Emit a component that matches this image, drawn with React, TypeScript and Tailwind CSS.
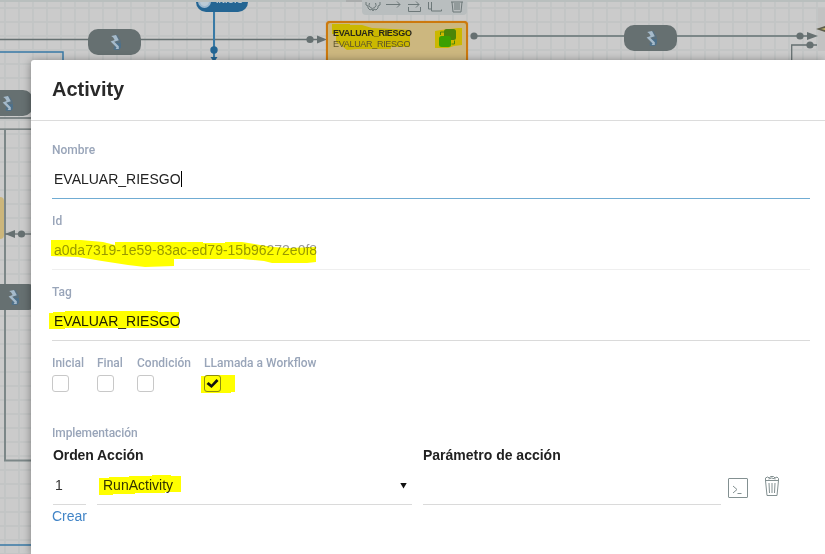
import React from "react";

function Zigzag({ className = "" }: { className?: string }) {
  return (
    <svg className={className} width="14" height="18" viewBox="0 0 14 18" fill="none">
      <path d="M8 10l5-.5v5L11 17H6l-.5-2z" fill="#4a708f" opacity=".8" />
      <path d="M8.500 2l3.500 6-4 1 4 4" stroke="#4a708f" strokeWidth="1.500" opacity=".5" />
      <path d="M3.200 3L8 2l2.800 5.300-4.600 1.500 4.600 4.400V16H7.600l1-1.600L2.600 8.600l4-1.700-1.400-2.400z" fill="#a5bacb" />
    </svg>
  );
}

function Relay({ className }: { className: string }) {
  return (
    <div className={`absolute flex h-[26px] w-[53px] items-center justify-center rounded-[10px] bg-[#667071] ${className}`}>
      <Zigzag />
    </div>
  );
}

function Diagram() {
  return (
    <div className="absolute inset-0 overflow-hidden bg-[#cbcbcb]">
      <svg className="absolute inset-0" width="825" height="554" fill="none">
        <defs>
          <pattern id="grid" x="4" y="7" width="14" height="14" patternUnits="userSpaceOnUse">
            <path d="M1 0v14M0 1h14" stroke="#c1c4c4" strokeWidth="1.6" />
          </pattern>
        </defs>
        <rect width="825" height="554" fill="url(#grid)" />
        <rect x="818" y="8" width="7" height="43" fill="#c2c2c2" />
        <g stroke="#667071" strokeWidth="1.3">
          <path d="M0 39.5h320M0 118h31M0 129.2h31" />
          <path d="M5 129v331.5h26" stroke="#7c8788" strokeWidth="2" />
          <path d="M5 234h26" />
          <path d="M475 36h336" stroke="#7c8788" strokeWidth="2" />
          <path d="M791.7 60V45H817" />
        </g>
        <g fill="#667071">
          <circle cx="310" cy="39.5" r="3.6" />
          <path d="M317 35.5l10 4-10 4z" />
          <circle cx="474" cy="36" r="3.6" />
          <circle cx="800" cy="36" r="3.6" />
          <path d="M807 32l11 4-11 4z" />
          <circle cx="810" cy="45" r="3.6" />
          <circle cx="21.5" cy="234" r="3.6" />
          <path d="M15 230l-10 4 10 4z" />
        </g>
        <path d="M825 26l-9 3 9 3z" fill="#5e5d4b" />
        <path d="M825 28l-4 1 4 1z" fill="#c6b86f" />
        <path d="M0 52h63v8M0 545h31" stroke="#397aa6" strokeWidth="1.5" />
        <path d="M214 11v49" stroke="#397aa6" strokeWidth="2" />
        <circle cx="214" cy="50" r="3.7" fill="#246593" />
        <path d="M210.5 57h7l-2 3h-3z" fill="#246593" />
      </svg>

      <div className="absolute left-[196px] top-[-13px] h-[25px] w-[52px] overflow-hidden rounded-[10px] bg-[#246593]">
        <div className="absolute left-[2px] top-[8px] h-[13px] w-[13px] rounded-full border-2 border-[#9eb9cf] bg-[#bccbd6]" />
        <span className="absolute left-[20px] top-[8px] font-['Liberation_Sans',sans-serif] text-[9px] font-bold leading-[10px] text-[#bccbd6]">INICIO</span>
      </div>
      <div className="absolute left-0 top-0 h-[2px] w-full bg-[#b9bfbe]" />
      <div className="absolute left-[346px] top-0 h-[2px] w-[50px] bg-[#aaadad]" />

      <Relay className="left-[88px] top-[29px]" />
      <Relay className="left-[624px] top-[25px]" />
      <Relay className="left-[-20px] top-[90px]" />
      <Relay className="left-[-14px] top-[284px]" />
      <div className="absolute left-0 top-[197px] h-[42px] w-[4px] rounded-r-sm bg-[#ccb67b]" />

      <div className="absolute left-[362px] top-0 h-[15px] w-[105px] rounded-b bg-[#b9bebf]">
        <svg width="105" height="15" fill="none" stroke="#6d7879" strokeWidth="1">
          <path d="M4 2v3l2 1v2l2 2 2-1 1 2h0l1-2 2 1 2-2v-2l2-1V2" />
          <path d="M7.5 3a3.5 3.5 0 1 0 6 0M24 4.5h14M35 1.5l3 3-3 3" />
          <path d="M46.500 7v4.500h12V7M46 4.5h11M54 1.5l3 3-3 3M66.500 2v7h3M69.500 2v9h10V9.500" />
          <path d="M90 2l1 10h8l1-10M93 3v7M95 3v7M97 3v7" />
          <path d="M89 2h12" />
        </svg>
      </div>

      <div className="absolute left-[326px] top-[21px] h-[60px] w-[142px] rounded border-2 border-[#cc790d] bg-[#ccb77f] font-['Liberation_Sans',sans-serif] text-[9px] leading-[11px] shadow-[0_0_1px_#cc790d]">
        <svg className="absolute left-[-2px] top-[-2px]" width="142" height="50">
          <path d="M6 3h18v1h12l10 3 21 1 17 1v17h-19v2H31l-10 1-5-4-6-4V13H6z" fill="#cbb800" />
          <path d="M109 10l6-1 17-2h4v17l-8 1-6 2h-13z" fill="#cbb800" />
          <rect x="118" y="8" width="12" height="11" rx="2.500" fill="#4b8508" />
          <rect x="113" y="15" width="12" height="11" rx="2.500" fill="#3ba000" />
          <path d="M114.500 14v-3h4M125.500 23h3v-3.500" stroke="#4b8508" fill="none" />
        </svg>
        <div className="relative pl-[5px] pt-[5px]">
          <div className="font-bold tracking-[-0.3px] text-[#292719]">EVALUAR_RIESGO</div>
          <div className="tracking-[-0.3px] text-[#5c532a]">EVALUAR_RIESGO</div>
        </div>
      </div>
    </div>
  );
}

const label = "h-5 font-[Roboto,sans-serif] text-[12px] font-medium leading-5 text-[#99a5b9]";

function Field({ name, value, line, text, caret, children }: {
  name: string; value: string; line: string; text: string; caret?: boolean; children?: React.ReactNode;
}) {
  return (
    <div className={`relative h-[59px] border-b ${line}`}>
      <div className={label}>{name}</div>
      <div className={`flex h-[38px] items-center pl-0.5 text-[14px] ${text}`}>
        {value}
        {caret && <span className="h-4 w-px bg-black" />}
      </div>
      {children}
    </div>
  );
}

function Check({ name, checked }: { name: string; checked?: boolean }) {
  return (
    <div>
      <div className={label}>{name}</div>
      <div className="relative mt-0.5 h-[17px] w-[17px] rounded-[3px] border border-[#c8c8c8]">
        {checked && (
          <svg className="absolute -left-1 -top-0.5 mix-blend-multiply" width="36" height="20">
            <path d="M0 2h13V1h21v17H30v1H0z" fill="#ff0" />
            <rect x="3.500" y="1.500" width="16" height="16" rx="2.500" fill="none" stroke="#b4b410" />
            <path d="M5.500 10l2-2 3 2.500L15.500 5l2 2-7 7z" fill="#111" />
          </svg>
        )}
      </div>
    </div>
  );
}

export default function App() {
  return (
    <div className="relative h-[554px] w-[825px] overflow-hidden pl-[31px] pt-[60px] font-['Liberation_Sans',sans-serif]">
      <Diagram />
      <section className="relative h-[494px] rounded-tl-[3px] bg-white shadow-[0_1px_8px_rgba(0,0,0,0.4)]">
        <header className="flex h-[61px] items-center border-b border-[#dcdcdc] pb-[2px] pl-[21px]">
          <h1 className="text-[20px] font-bold text-[#292929]">Activity</h1>
        </header>
        <main className="pl-[21px] pr-[15px] pt-[19px]">
          <div className="flex flex-col gap-3">
            <Field name="Nombre" value="EVALUAR_RIESGO" line="border-[#70acd3]" text="text-[#222]" caret />
            <Field name="Id" value="a0da7319-1e59-83ac-ed79-15b96272e0f8" line="border-[#efefef]" text="text-[#999]">
              <svg className="absolute left-[-1px] top-[28px] mix-blend-multiply" width="268" height="30">
                <path d="M0 1h30l22 2 12 3V3h88v1h22V3h17l31 5 16 1 27-1v15l-9 1h-35l-8-2-22-2h-68v7l-29 1-17-2-26-4-24-4-27-1z" fill="#ff0" />
              </svg>
            </Field>
            <Field name="Tag" value="EVALUAR_RIESGO" line="border-[#dadada]" text="text-[#222]">
              <svg className="absolute left-[-3px] top-[28px] mix-blend-multiply" width="132" height="20">
                <path d="M0 3h4V2h12V1h93v1h21v16H16v1H0z" fill="#ff0" />
              </svg>
            </Field>
          </div>
          <div className="mt-3 flex h-[39px]">
            <div className="w-[45px]"><Check name="Inicial" /></div>
            <div className="w-[40px]"><Check name="Final" /></div>
            <div className="w-[67px]"><Check name="Condición" /></div>
            <Check name="LLamada a Workflow" checked />
          </div>
          <div className={`mt-[31px] tracking-[-0.1px] ${label}`}>Implementación</div>
          <div className="grid grid-cols-[33px_315px_298px] gap-x-[11px] whitespace-nowrap pl-px text-[14px] font-bold leading-6 text-[#212121]">
            <span className="tracking-[-0.1px]">Orden</span>
            <span>Acción</span>
            <span>Parámetro de acción</span>
          </div>
          <div className="flex h-[38px] pl-px text-[14px] text-[#333]">
            <div className="flex w-[33px] items-center border-b border-[#dadada] pl-0.5">1</div>
            <div className="relative ml-[11px] flex w-[315px] items-center justify-between border-b border-[#dadada] pl-[6px] pr-[5px]">
              RunActivity
              <span className="h-[6px] w-[7px] bg-[#111] [clip-path:polygon(0_0,100%_0,50%_100%)]" />
              <svg className="absolute left-[2px] top-[8px] mix-blend-multiply" width="83" height="21">
                <path d="M0 3h10V2h20V1h23V0h19v1h10v16H66v1H36v1H14v1H0z" fill="#ff0" />
              </svg>
            </div>
            <div className="ml-[11px] w-[298px] border-b border-[#dadada]" />
            <svg className="ml-[7px] mt-[11px]" width="20" height="20" fill="none" stroke="#839091">
              <rect x=".5" y=".5" width="19" height="19" rx=".5" />
              <path d="M5 8l4 3.500L5 15M9.500 15.500h4" />
            </svg>
            <svg className="ml-[16px] mt-[8px]" width="16" height="22" fill="none" stroke="#839091">
              <path d="M1 5.500h14M1.500 5.500L3 20.500h10l1.500-15M5 8l.5 10M8 8v10M11 8l-.5 10" />
              <path d="M1.500 5V3l2-1 2 1 1-1.500h3L11 3l2-1 1.500 1.500V5M4.500 4l3-1 4 1" />
            </svg>
          </div>
          <a className="block h-[22px] text-[14px] leading-[22px] text-[#4285c7]">Crear</a>
        </main>
      </section>
    </div>
  );
}
